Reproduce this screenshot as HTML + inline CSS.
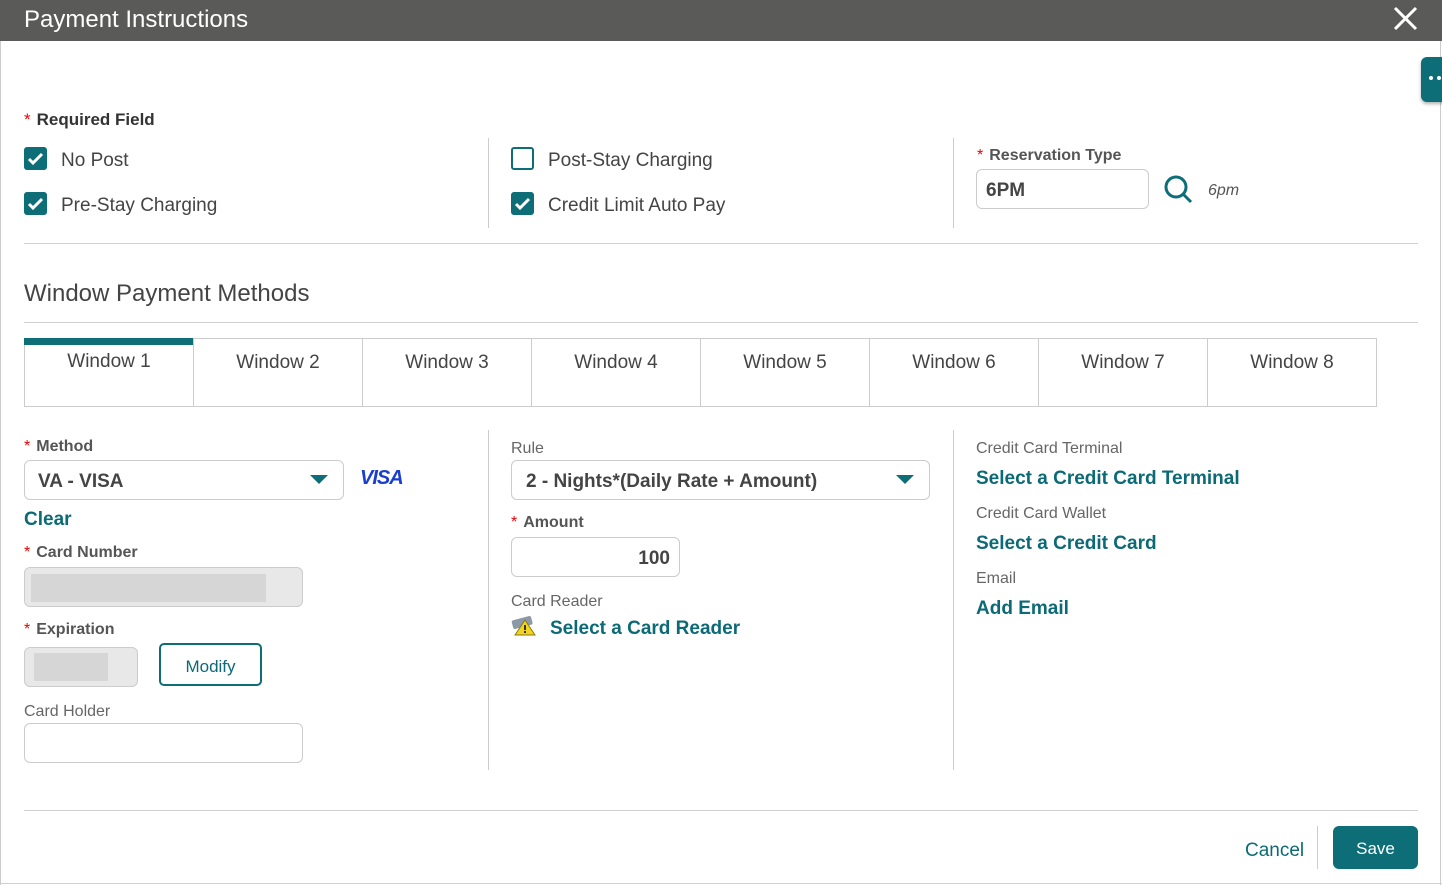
<!DOCTYPE html>
<html><head><meta charset="utf-8"><style>
*{margin:0;padding:0;box-sizing:border-box}
body{width:1442px;height:885px;position:relative;background:#fff;font-family:"Liberation Sans",sans-serif;color:#333;overflow:hidden}
.a{position:absolute;white-space:nowrap}
.t{color:#0b6a75}
.lbl{font-size:16px;font-weight:bold;color:#555;margin-top:2px}
.lbl b{color:#e00;font-weight:normal;margin-right:6px}
.sm{font-size:16px;color:#666;margin-top:2px}
.cb{position:absolute;width:23px;height:23px;border-radius:3px;background:#0d6e78}
.cb svg{position:absolute;left:3px;top:4px}
.cbo{position:absolute;width:23px;height:23px;border-radius:3px;border:2px solid #0d6e78;background:#fff}
.ck{font-size:19px;color:#444;margin-top:2px}
.inp{position:absolute;border:1px solid #ccc;border-radius:6px;background:#fff}
.vl{position:absolute;width:1px;background:#ccc}
.hl{position:absolute;height:1px;background:#d0d0d0}
.tab{position:absolute;top:338px;height:69px;width:170px;border:1px solid #ccc;font-size:19px;color:#444;text-align:center;padding-top:13px}
.lk{font-size:19px;font-weight:bold;color:#0b6a75;margin-top:2px}
</style></head><body>
<div class="a" style="left:0;top:0;width:1442px;height:41px;background:#5a5a58"></div>
<div class="a" style="left:24px;top:6px;font-size:24px;color:#fff">Payment Instructions</div>
<svg class="a" style="left:1393px;top:6px" width="25" height="25" viewBox="0 0 25 25"><path d="M2 2L23 23M23 2L2 23" stroke="#fff" stroke-width="3"/></svg>
<div class="vl" style="left:0;top:41px;height:844px"></div>
<div class="vl" style="left:1440px;top:41px;height:844px"></div>
<div class="hl" style="left:0;top:883px;width:1442px"></div>
<div class="a" style="left:1421px;top:57px;width:24px;height:45px;background:#0d6e78;border-radius:6px 0 0 6px;box-shadow:0 2px 3px rgba(0,0,0,.3)"></div>
<div class="a" style="left:1429px;top:76px;width:4px;height:4px;border-radius:2px;background:#fff"></div>
<div class="a" style="left:1437px;top:76px;width:4px;height:4px;border-radius:2px;background:#fff"></div>

<div class="a lbl" style="left:24px;top:108px;font-size:17px;color:#333"><b>*</b>Required Field</div>
<div class="cb" style="left:24px;top:147px"><svg width="17" height="15" viewBox="0 0 17 15"><path d="M2 8l4 4 9-9" stroke="#fff" stroke-width="3" fill="none"/></svg></div>
<div class="a ck" style="left:61px;top:148px">No Post</div>
<div class="cb" style="left:24px;top:192px"><svg width="17" height="15" viewBox="0 0 17 15"><path d="M2 8l4 4 9-9" stroke="#fff" stroke-width="3" fill="none"/></svg></div>
<div class="a ck" style="left:61px;top:193px">Pre-Stay Charging</div>
<div class="vl" style="left:488px;top:138px;height:90px"></div>
<div class="cbo" style="left:511px;top:147px"></div>
<div class="a ck" style="left:548px;top:148px">Post-Stay Charging</div>
<div class="cb" style="left:511px;top:192px"><svg width="17" height="15" viewBox="0 0 17 15"><path d="M2 8l4 4 9-9" stroke="#fff" stroke-width="3" fill="none"/></svg></div>
<div class="a ck" style="left:548px;top:193px">Credit Limit Auto Pay</div>
<div class="vl" style="left:953px;top:138px;height:90px"></div>
<div class="a lbl" style="left:977px;top:145px"><b>*</b>Reservation Type</div>
<div class="inp" style="left:976px;top:169px;width:173px;height:40px"></div>
<div class="a" style="left:986px;top:180px;font-size:19px;font-weight:bold;color:#444">6PM</div>
<svg class="a" style="left:1162px;top:173px" width="32" height="32" viewBox="0 0 32 32"><circle cx="14" cy="14" r="10" stroke="#0d6e78" stroke-width="3" fill="none"/><path d="M21 21l8 8" stroke="#0d6e78" stroke-width="3"/></svg>
<div class="a" style="left:1208px;top:182px;font-size:16px;font-style:italic;color:#555">6pm</div>
<div class="hl" style="left:24px;top:243px;width:1394px"></div>

<div class="a" style="left:24px;top:280px;font-size:24px;color:#444">Window Payment Methods</div>
<div class="hl" style="left:24px;top:322px;width:1394px"></div>
<div class="tab" style="left:24px;border-top:none"><div style="position:absolute;left:-1px;top:0;width:170px;height:7px;background:#0d6e78"></div>Window 1</div>
<div class="tab" style="left:193px">Window 2</div>
<div class="tab" style="left:362px">Window 3</div>
<div class="tab" style="left:531px">Window 4</div>
<div class="tab" style="left:700px">Window 5</div>
<div class="tab" style="left:869px">Window 6</div>
<div class="tab" style="left:1038px">Window 7</div>
<div class="tab" style="left:1207px">Window 8</div>

<div class="a lbl" style="left:24px;top:436px"><b>*</b>Method</div>
<div class="inp" style="left:24px;top:460px;width:320px;height:40px"></div>
<div class="a" style="left:38px;top:471px;font-size:19px;font-weight:bold;color:#444">VA - VISA</div>
<svg class="a" style="left:310px;top:475px" width="18" height="10"><path d="M0 0h18L9 9z" fill="#0d6e78"/></svg>
<div class="a" style="left:360px;top:467px;font-size:20px;font-weight:bold;font-style:italic;color:#1a3fd0;letter-spacing:-1px">VISA</div>
<div class="a lk" style="left:24px;top:507px">Clear</div>
<div class="a lbl" style="left:24px;top:542px"><b>*</b>Card Number</div>
<div class="a" style="left:24px;top:567px;width:279px;height:40px;border:1px solid #ccc;border-radius:6px;background:#e8e8e8"></div>
<div class="a" style="left:31px;top:574px;width:235px;height:28px;background:#d6d6d6"></div>
<div class="a lbl" style="left:24px;top:619px"><b>*</b>Expiration</div>
<div class="a" style="left:24px;top:647px;width:114px;height:40px;border:1px solid #ccc;border-radius:6px;background:#e8e8e8"></div>
<div class="a" style="left:34px;top:653px;width:74px;height:28px;background:#d6d6d6"></div>
<div class="a" style="left:159px;top:643px;width:103px;height:43px;border:2px solid #0d6e78;border-radius:5px;font-size:17px;color:#0b6a75;text-align:center;padding-top:12px">Modify</div>
<div class="a sm" style="left:24px;top:701px">Card Holder</div>
<div class="inp" style="left:24px;top:723px;width:279px;height:40px"></div>
<div class="vl" style="left:488px;top:430px;height:340px"></div>

<div class="a sm" style="left:511px;top:438px">Rule</div>
<div class="inp" style="left:511px;top:460px;width:419px;height:40px"></div>
<div class="a" style="left:526px;top:471px;font-size:19px;font-weight:bold;color:#444">2 - Nights*(Daily Rate + Amount)</div>
<svg class="a" style="left:896px;top:475px" width="18" height="10"><path d="M0 0h18L9 9z" fill="#0d6e78"/></svg>
<div class="a lbl" style="left:511px;top:512px"><b>*</b>Amount</div>
<div class="inp" style="left:511px;top:537px;width:169px;height:40px"></div>
<div class="a" style="left:580px;top:548px;width:90px;text-align:right;font-size:19px;font-weight:bold;color:#444">100</div>
<div class="a sm" style="left:511px;top:591px">Card Reader</div>
<svg class="a" style="left:511px;top:615px" width="26" height="22" viewBox="0 0 26 22"><rect x="1" y="3" width="20" height="9" rx="2" fill="#8a98a8" transform="rotate(-15 11 7)"/><path d="M14 5L24 20H4z" fill="#f2d321" stroke="#8a7a10"/><rect x="13" y="10" width="2" height="5" fill="#333"/><rect x="13" y="16" width="2" height="2" fill="#333"/></svg>
<div class="a lk" style="left:550px;top:616px">Select a Card Reader</div>
<div class="vl" style="left:953px;top:430px;height:340px"></div>

<div class="a sm" style="left:976px;top:438px">Credit Card Terminal</div>
<div class="a lk" style="left:976px;top:466px">Select a Credit Card Terminal</div>
<div class="a sm" style="left:976px;top:503px">Credit Card Wallet</div>
<div class="a lk" style="left:976px;top:531px">Select a Credit Card</div>
<div class="a sm" style="left:976px;top:568px">Email</div>
<div class="a lk" style="left:976px;top:596px">Add Email</div>

<div class="hl" style="left:24px;top:810px;width:1394px"></div>
<div class="a" style="left:1245px;top:840px;font-size:19px;color:#0b6a75">Cancel</div>
<div class="vl" style="left:1317px;top:826px;height:43px"></div>
<div class="a" style="left:1333px;top:826px;width:85px;height:43px;background:#0d6e78;border-radius:6px;color:#fff;font-size:17px;text-align:center;padding-top:13px">Save</div>
</body></html>
